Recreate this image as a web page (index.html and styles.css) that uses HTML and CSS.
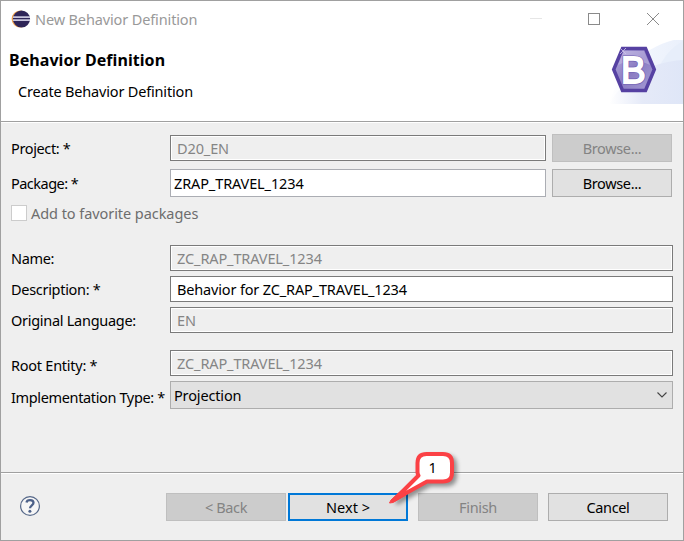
FILE: index.html
```html
<!DOCTYPE html>
<html lang="en">
<head>
<meta charset="utf-8">
<title>New Behavior Definition</title>
<link rel="stylesheet" href="styles.css">
</head>
<body>
<div class="window">
  <header class="banner">
    <div class="titlebar">
      <svg class="app-icon" width="20" height="20" viewBox="0 0 20 20">
        <circle cx="9.200" cy="10" r="8.600" fill="#f0a24e"/>
        <circle cx="10.500" cy="10" r="8.600" fill="#2f2558"/>
        <path d="M2 8.200h17M2 11.200h17" stroke="#c9c5dc" stroke-width="1.700"/>
      </svg>
      <span class="title">New Behavior Definition</span>
      <svg class="controls" width="132" height="16" viewBox="0 0 132 16" fill="none">
        <path d="M1 7.500h12" stroke="#e6e6e6"/>
        <rect x="59.500" y="2.500" width="11" height="11" stroke="#8a8a8a"/>
        <path d="M118 2l12 12M130 2l-12 12" stroke="#8a8a8a"/>
      </svg>
    </div>
    <h1>Behavior Definition</h1>
    <p>Create Behavior Definition</p>
    <svg class="art" width="80" height="66" viewBox="0 0 80 66">
      <defs>
        <linearGradient id="sky" x1="0" x2="1"><stop offset="0" stop-color="#fff"/><stop offset=".45" stop-color="#e5eaf8"/><stop offset="1" stop-color="#dfe6f7"/></linearGradient>
        <linearGradient id="haze" x1="0" x2="1"><stop offset="0" stop-color="#fff"/><stop offset=".5" stop-color="#f1f5fd"/><stop offset="1" stop-color="#eaf0fb"/></linearGradient>
        <linearGradient id="gem" x1="0" y1="0" x2="1" y2="1"><stop offset="0" stop-color="#b9afe0"/><stop offset=".5" stop-color="#8a7cc2"/><stop offset="1" stop-color="#a89cd6"/></linearGradient>
        <filter id="soft"><feGaussianBlur stdDeviation="1"/></filter>
      </defs>
      <path d="M6 64C16 28 44 4 80-2V64z" fill="url(#haze)"/>
      <path d="M48 64C48 36 60 12 80 1V64z" fill="#e7eefa"/>
      <path d="M6 64C20 40 45 22 80 20V64z" fill="url(#sky)"/>
      <path d="M19 53.500h24" stroke="#555" stroke-width="2" filter="url(#soft)"/>
      <path d="M19.500 8.500h23L51.300 29.500 42.500 50.500h-23L10.700 29.500z" fill="url(#gem)" stroke="#5641a2" stroke-width="3.500"/>
      <path d="M21 11h20l6 14q-16-8-32 0z" fill="#cbc3e8" opacity=".45"/>
      <path d="M17 8l6 6m0-6l-6 6" stroke="#cfc7ea" stroke-width=".8"/>
      <text class="gem-letter outline" x="18" y="43">B</text>
      <text class="gem-letter" x="18" y="43">B</text>
    </svg>
  </header>

  <main class="form">
    <div class="row first"><label class="t-project">Project: *</label><div class="field muted"><span class="t-d20">D20_EN</span></div><button class="side" disabled><span class="t-browse">Browse...</span></button></div>
    <div class="row package"><label class="t-package">Package: *</label><div class="field edit"><span class="t-zrap">ZRAP_TRAVEL_1234</span></div><button class="side"><span class="t-browse">Browse...</span></button></div>
    <div class="favorite"><i class="checkbox"></i><span class="t-favorite">Add to favorite packages</span></div>
    <div class="row name"><label class="t-name">Name:</label><div class="field muted"><span class="t-zc">ZC_RAP_TRAVEL_1234</span></div></div>
    <div class="row"><label class="t-description">Description: *</label><div class="field"><span class="t-behavior">Behavior for ZC_RAP_TRAVEL_1234</span></div></div>
    <div class="row"><label class="t-original">Original Language:</label><div class="field muted"><span class="t-en">EN</span></div></div>
    <div class="row root"><label class="t-root">Root Entity: *</label><div class="field muted"><span class="t-zc">ZC_RAP_TRAVEL_1234</span></div></div>
    <div class="row type"><label class="t-type">Implementation Type: *</label><div class="field combo"><span class="t-projection">Projection</span><svg width="10" height="6" viewBox="0 0 10 6" fill="none"><path d="M.5.5L5 5 9.500.5" stroke="#444" stroke-width="1.100"/></svg></div></div>
  </main>

  <footer class="footer">
    <svg class="help" width="22" height="22" viewBox="0 0 22 22" fill="none">
      <circle cx="11" cy="11" r="9.400" fill="#f6f6f6" stroke="#566889" stroke-width="1.200"/>
      <path d="M7.500 7.500C8 4.200 14.500 4.200 14.500 7.800 14.500 10.200 11 10.500 11 13.300" stroke="#4d6189" stroke-width="2.300"/>
      <circle cx="10.900" cy="16.200" r="1.500" fill="#4d6189"/>
    </svg>
    <button class="back" disabled><span class="t-back">&lt; Back</span></button>
    <button class="next"><span class="t-next">Next &gt;</span></button>
    <button class="finish" disabled><span class="t-finish">Finish</span></button>
    <button class="cancel"><span class="t-cancel">Cancel</span></button>
  </footer>

  <svg class="callout" width="76" height="62" viewBox="0 0 76 62">
    <path d="M44.500 7H61Q70 7 70 16V25.500Q70 34.500 61 34.500H45L12.500 52.500 36.500 28.500Q35.500 27 35.500 25V16Q35.500 7 44.500 7z"/>
    <path class="tip" d="M7.500 56L9 53 20 43 24 48 11 55.500z"/>
    <text x="46.500" y="25.500">1</text>
  </svg>
</div>
</body>
</html>
```
FILE: styles.css
```css
* { box-sizing: border-box; }
body {
  margin: 0;
  font: 14.5px/20px "Noto Sans", sans-serif;
  color: #000;
}
.window {
  position: relative;
  display: flex;
  flex-direction: column;
  width: 684px;
  height: 541px;
  border: 1px solid #a0a0a0;
  background: #efefef;
  white-space: nowrap;
  overflow: hidden;
}
.banner {
  position: relative;
  height: 121px;
  background: #fff;
  border-bottom: 1px solid #a0a0a0;
}
.titlebar {
  display: flex;
  align-items: center;
  height: 35px;
  padding: 0 22px 0 10px;
}
.title { margin-left: 4px; color: #999; letter-spacing: -.13px; }
.controls { margin-left: auto; }
h1 { margin: 14px 0 0 8px; font-size: 16px; line-height: 20px; letter-spacing: .06px; }
p { margin: 11px 0 0 17px; letter-spacing: -.18px; }
.art { position: absolute; right: 0; top: 39px; }
.gem-letter { font: 400 37px "Liberation Sans", sans-serif; fill: #fff; stroke: #fff; stroke-width: 1.8px; }
.gem-letter.outline { stroke: #7160b3; stroke-width: 3.2px; }

.form {
  flex: 1;
  padding: 12px 10px 0;
  border-top: 1px solid #fff;
}
.row {
  display: flex;
  align-items: center;
  height: 26px;
  margin-bottom: 5px;
}
.row label { width: 159px; flex: none; }
.row.first { height: 28px; margin-bottom: 7px; margin-top: -1px; }
.row.package { height: 28px; margin-bottom: 6px; }
.row.root { margin-top: 17px; }
.row.root label { padding-top: 3px; }
.row.type { height: 28px; }
.row.type label { padding-top: 3px; }
.field {
  flex: 1;
  display: flex;
  align-items: center;
  height: 26px;
  padding: 0 6px;
  border: 1px solid #7a7a7a;
  background: #fff;
}
.field.muted {
  background: #efefef;
  color: #858585;
  box-shadow: inset 0 0 0 1px #fff;
}
.field.edit { height: 28px; border-color: #abadb3; padding: 0 3px; }
.field.combo {
  height: 28px;
  justify-content: space-between;
  padding: 0 5px 0 3px;
  border-color: #adadad;
  background: #e1e1e1;
}
button {
  width: 120px;
  height: 28px;
  padding: 0;
  border: 1px solid #adadad;
  background: #e1e1e1;
  color: #000;
  font: inherit;
}
button:disabled { border-color: #bfbfbf; background: #ccc; color: #838383; }
.side { margin: 0 1px 0 6px; }
.favorite {
  display: flex;
  align-items: center;
  height: 20px;
  margin-bottom: 22px;
  color: #6d6d6d;
}
.checkbox { width: 16px; height: 16px; margin-right: 4px; border: 1px solid #ccc; background: #fff; }

.footer {
  display: flex;
  align-items: flex-start;
  height: 68px;
  padding: 20px 15px 0 18px;
  border-top: 1px solid #a0a0a0;
  box-shadow: inset 0 1px #fff;
}
.help { margin-top: 2px; }
.back { margin-left: 125px; }
.next { margin-left: 2px; border: 2px solid #0078d7; }
.finish, .cancel { margin-left: 10px; }

.t-project, .t-name, .t-type, .t-browse { letter-spacing: -.36px; }
.t-description { letter-spacing: -.3px; }
.t-package { letter-spacing: -.52px; }
.t-root { letter-spacing: -.25px; }
.t-original { letter-spacing: -.28px; }
.t-favorite { letter-spacing: -.06px; }
.t-behavior { letter-spacing: -.16px; }
.t-projection { letter-spacing: -.15px; }
.t-zc, .t-zrap, .t-d20, .t-en { letter-spacing: -.12px; }
.t-back, .t-finish, .t-cancel { letter-spacing: -.35px; }
.t-next { letter-spacing: 0; }

.callout { position: absolute; left: 381px; top: 446px; overflow: visible; }
.callout path {
  fill: #fff;
  stroke: #fb4145;
  stroke-width: 4px;
  stroke-linejoin: round;
  filter: drop-shadow(3px 3px 2px rgba(0, 0, 0, .4));
}
.callout .tip { fill: #fb4145; stroke-width: 1px; filter: none; }
.callout text { font: 14.5px "Noto Sans", sans-serif; }
```
